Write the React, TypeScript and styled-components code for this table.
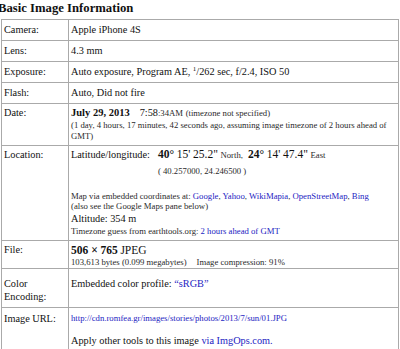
import styled, { createGlobalStyle } from "styled-components"

const serif = `"Liberation Serif", "Times New Roman", Times, serif`

const GlobalStyle = createGlobalStyle`
  html, body {
    margin: 0;
    background: #fff;
  }
`

const Page = styled.div`
  width: 400px;
  height: 349px;
  overflow: hidden;
  font-family: ${serif};
  color: #111;
`

const Title = styled.h2`
  margin: 0 0 3px -2px;
  height: 16px;
  font-family: ${serif};
  font-size: 12.7px;
  line-height: 16px;
  font-weight: bold;
`

const InfoTable = styled.table`
  margin-left: 1px;
  width: 398px;
  border-collapse: collapse;
  table-layout: fixed;
  font-family: ${serif};
  font-size: 10.3px;
  line-height: 12px;
  color: #111;
`

const LabelCol = styled.col`
  width: 67px;
`

const LabelCell = styled.td<{ $pt?: number; $pb?: number; $lh?: number }>`
  border: 1px solid #aaa;
  padding: ${(p) => p.$pt ?? 4}px 2px ${(p) => p.$pb ?? 4}px 2px;
  vertical-align: top;
  line-height: ${(p) => p.$lh ?? 12}px;
`

const ValueCell = styled.td<{ $pt?: number; $pb?: number }>`
  border: 1px solid #aaa;
  padding: ${(p) => p.$pt ?? 4}px 2px ${(p) => p.$pb ?? 4}px 2px;
  vertical-align: top;
`

const Line = styled.div<{ $mt?: number }>`
  margin-top: ${(p) => p.$mt ?? 0}px;
  white-space: nowrap;
`

const SmallLine = styled.div<{ $mt?: number }>`
  margin-top: ${(p) => p.$mt ?? 0}px;
  font-size: 8.7px;
  line-height: 10.5px;
  color: #2a2a2a;
  white-space: nowrap;
`

const Small = styled.span`
  font-size: 8.7px;
  color: #2a2a2a;
`

const Strong = styled.b<{ $size?: number }>`
  font-size: ${(p) => p.$size ?? 10.3}px;
`

const Big = styled.span`
  font-size: 11.5px;
`

const Time = styled.span`
  margin-left: 10px;
`

const Sup = styled.sup`
  font-size: 7px;
  line-height: 0;
  vertical-align: 4px;
`

const Link = styled.a`
  color: #2323c2;
  text-decoration: none;
`

const LatLine = styled.div`
  display: flex;
  gap: 8px;
  line-height: 13px;
  white-space: nowrap;
`

const Coords = styled.div`
  display: flex;
  flex-direction: column;
`

const Gap = styled.span<{ $w: number }>`
  display: inline-block;
  width: ${(p) => p.$w}px;
`

export default function App() {
  return (
    <Page>
      <GlobalStyle />
      <Title>Basic Image Information</Title>
      <InfoTable>
        <colgroup>
          <LabelCol />
          <col />
        </colgroup>
        <tbody>
          <tr>
            <LabelCell>Camera:</LabelCell>
            <ValueCell>Apple iPhone 4S</ValueCell>
          </tr>
          <tr>
            <LabelCell>Lens:</LabelCell>
            <ValueCell>4.3 mm</ValueCell>
          </tr>
          <tr>
            <LabelCell>Exposure:</LabelCell>
            <ValueCell>
              Auto exposure, Program AE, <Sup>1</Sup>/262 sec, f/2.4, ISO 50
            </ValueCell>
          </tr>
          <tr>
            <LabelCell>Flash:</LabelCell>
            <ValueCell>Auto, Did not fire</ValueCell>
          </tr>
          <tr>
            <LabelCell $pt={3}>Date:</LabelCell>
            <ValueCell $pt={3}>
              <Line>
                <Strong $size={10.5}>July 29, 2013</Strong>
                <Time>7:58</Time>
                <Small>:34AM</Small> <Small>(timezone not specified)</Small>
              </Line>
              <SmallLine $mt={1}>
                (1 day, 4 hours, 17 minutes, 42 seconds ago, assuming image timezone of 2 hours ahead of
              </SmallLine>
              <SmallLine>GMT)</SmallLine>
            </ValueCell>
          </tr>
          <tr>
            <LabelCell $pt={3}>Location:</LabelCell>
            <ValueCell $pt={2}>
              <LatLine>
                <span>Latitude/longitude:</span>
                <Coords>
                  <span>
                    <Strong $size={11.5}>40°</Strong> <Big>15' 25.2"</Big> <Small>North,</Small>
                    <Gap $w={5} />
                    <Strong $size={11.5}>24°</Strong> <Big>14' 47.4"</Big> <Small>East</Small>
                  </span>
                  <SmallLine $mt={4}>( 40.257000, 24.246500 )</SmallLine>
                </Coords>
              </LatLine>
              <SmallLine $mt={14}>
                Map via embedded coordinates at: <Link>Google</Link>, <Link>Yahoo</Link>,{" "}
                <Link>WikiMapia</Link>, <Link>OpenStreetMap</Link>, <Link>Bing</Link>
              </SmallLine>
              <SmallLine>(also see the Google Maps pane below)</SmallLine>
              <Line $mt={1}>Altitude: 354 m</Line>
              <SmallLine $mt={1}>
                Timezone guess from earthtools.org: <Link>2 hours ahead of GMT</Link>
              </SmallLine>
            </ValueCell>
          </tr>
          <tr>
            <LabelCell $pt={3}>File:</LabelCell>
            <ValueCell $pt={3} $pb={0}>
              <Line>
                <Strong $size={11.5}>506 × 765</Strong> <Big>JPEG</Big>
              </Line>
              <SmallLine>
                103,613 bytes (0.099 megabytes)
                <Gap $w={10} />
                Image compression: 91%
              </SmallLine>
            </ValueCell>
          </tr>
          <tr>
            <LabelCell $pt={8} $lh={13}>
              Color Encoding:
            </LabelCell>
            <ValueCell $pt={9}>
              Embedded color profile: <Link>“sRGB”</Link>
            </ValueCell>
          </tr>
          <tr>
            <LabelCell $pt={5}>Image URL:</LabelCell>
            <ValueCell $pt={5}>
              <SmallLine>
                <Link>http://cdn.romfea.gr/images/stories/photos/2013/7/sun/01.JPG</Link>
              </SmallLine>
              <Line $mt={12}>
                Apply other tools to this image <Link>via ImgOps.com.</Link>
              </Line>
            </ValueCell>
          </tr>
        </tbody>
      </InfoTable>
    </Page>
  )
}
